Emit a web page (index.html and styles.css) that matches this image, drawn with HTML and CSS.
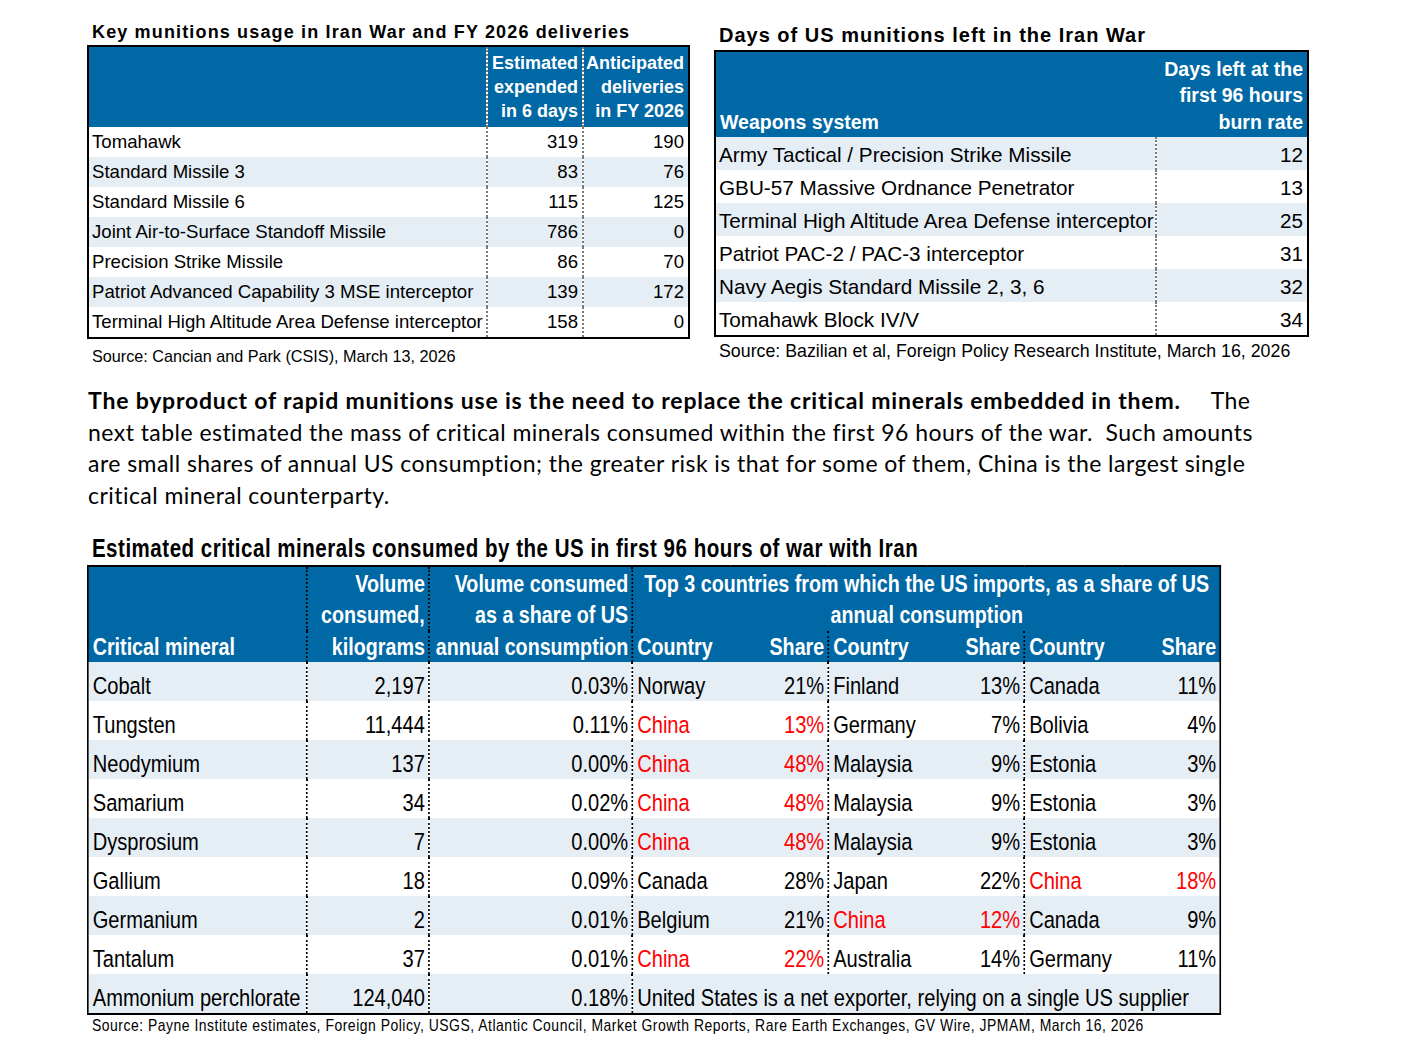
FILE: index.html
```html
<!DOCTYPE html>
<html lang="en">
<head>
    <meta charset="UTF-8">
    <title>Iran War munitions and critical minerals</title>
    <link rel="stylesheet" href="styles.css">
</head>
<body>
<div class="page">
    <div class="top">
        <section class="panel usage-panel">
            <h2 class="title usage-title">Key munitions usage in Iran War and FY 2026 deliveries</h2>
            <table class="usage">
                <colgroup><col class="c-name"><col class="c-used"><col class="c-due"></colgroup>
                <thead>
                <tr>
                    <th class="name"></th>
                    <th class="num">Estimated<br>expended<br>in 6 days</th>
                    <th class="num">Anticipated<br>deliveries<br>in FY 2026</th>
                </tr>
                </thead>
                <tbody>
                <tr><td class="name">Tomahawk</td><td class="num">319</td><td class="num">190</td></tr>
                <tr class="alt"><td class="name">Standard Missile 3</td><td class="num">83</td><td class="num">76</td></tr>
                <tr><td class="name">Standard Missile 6</td><td class="num">115</td><td class="num">125</td></tr>
                <tr class="alt"><td class="name">Joint Air-to-Surface Standoff Missile</td><td class="num">786</td><td class="num">0</td></tr>
                <tr><td class="name">Precision Strike Missile</td><td class="num">86</td><td class="num">70</td></tr>
                <tr class="alt"><td class="name">Patriot Advanced Capability 3 MSE interceptor</td><td class="num">139</td><td class="num">172</td></tr>
                <tr><td class="name">Terminal High Altitude Area Defense interceptor</td><td class="num">158</td><td class="num">0</td></tr>
                </tbody>
            </table>
            <p class="source usage-source">Source: Cancian and Park (CSIS), March 13, 2026</p>
        </section>

        <section class="panel days-panel">
            <h2 class="title days-title">Days of US munitions left in the Iran War</h2>
            <table class="days">
                <colgroup><col class="c-name"><col class="c-days"></colgroup>
                <thead>
                <tr>
                    <th class="name">Weapons system</th>
                    <th class="num">Days left at the<br>first 96 hours<br>burn rate</th>
                </tr>
                </thead>
                <tbody>
                <tr class="alt"><td class="name">Army Tactical / Precision Strike Missile</td><td class="num">12</td></tr>
                <tr><td class="name">GBU-57 Massive Ordnance Penetrator</td><td class="num">13</td></tr>
                <tr class="alt"><td class="name">Terminal High Altitude Area Defense interceptor</td><td class="num">25</td></tr>
                <tr><td class="name">Patriot PAC-2 / PAC-3 interceptor</td><td class="num">31</td></tr>
                <tr class="alt"><td class="name">Navy Aegis Standard Missile 2, 3, 6</td><td class="num">32</td></tr>
                <tr><td class="name">Tomahawk Block IV/V</td><td class="num">34</td></tr>
                </tbody>
            </table>
            <p class="source days-source">Source: Bazilian et al, Foreign Policy Research Institute, March 16, 2026</p>
        </section>
    </div>

    <p class="lead">
        <b>The byproduct of rapid munitions use is the need to replace the critical minerals embedded in them.</b><span class="gap"></span>The<br>
        next table estimated the mass of critical minerals consumed within the first 96 hours of the war.&nbsp; Such amounts<br>
        are small shares of annual US consumption; the greater risk is that for some of them, China is the largest single<br>
        critical mineral counterparty.
    </p>

    <section class="minerals-panel">
        <h2 class="title minerals-title">Estimated critical minerals consumed by the US in first 96 hours of war with Iran</h2>
        <table class="minerals">
            <colgroup>
                <col class="c-mineral"><col class="c-vol"><col class="c-pct">
                <col class="c-country"><col class="c-share">
                <col class="c-country"><col class="c-share">
                <col class="c-country"><col class="c-share">
            </colgroup>
            <thead>
            <tr class="head-top">
                <th class="mineral" rowspan="2">Critical mineral</th>
                <th class="vol" rowspan="2">Volume<br>consumed,<br>kilograms</th>
                <th class="pct" rowspan="2">Volume consumed<br>as a share of US<br>annual consumption</th>
                <th class="group" colspan="6">Top 3 countries from which the US imports, as a share of US<br>annual consumption</th>
            </tr>
            <tr class="head-sub">
                <th class="country">Country</th><th class="share">Share</th>
                <th class="country">Country</th><th class="share">Share</th>
                <th class="country">Country</th><th class="share">Share</th>
            </tr>
            </thead>
            <tbody>
            <tr class="alt">
                <td class="mineral">Cobalt</td><td class="vol">2,197</td><td class="pct">0.03%</td>
                <td class="country">Norway</td><td class="share">21%</td>
                <td class="country">Finland</td><td class="share">13%</td>
                <td class="country">Canada</td><td class="share">11%</td>
            </tr>
            <tr>
                <td class="mineral">Tungsten</td><td class="vol">11,444</td><td class="pct">0.11%</td>
                <td class="country china">China</td><td class="share china">13%</td>
                <td class="country">Germany</td><td class="share">7%</td>
                <td class="country">Bolivia</td><td class="share">4%</td>
            </tr>
            <tr class="alt">
                <td class="mineral">Neodymium</td><td class="vol">137</td><td class="pct">0.00%</td>
                <td class="country china">China</td><td class="share china">48%</td>
                <td class="country">Malaysia</td><td class="share">9%</td>
                <td class="country">Estonia</td><td class="share">3%</td>
            </tr>
            <tr>
                <td class="mineral">Samarium</td><td class="vol">34</td><td class="pct">0.02%</td>
                <td class="country china">China</td><td class="share china">48%</td>
                <td class="country">Malaysia</td><td class="share">9%</td>
                <td class="country">Estonia</td><td class="share">3%</td>
            </tr>
            <tr class="alt">
                <td class="mineral">Dysprosium</td><td class="vol">7</td><td class="pct">0.00%</td>
                <td class="country china">China</td><td class="share china">48%</td>
                <td class="country">Malaysia</td><td class="share">9%</td>
                <td class="country">Estonia</td><td class="share">3%</td>
            </tr>
            <tr>
                <td class="mineral">Gallium</td><td class="vol">18</td><td class="pct">0.09%</td>
                <td class="country">Canada</td><td class="share">28%</td>
                <td class="country">Japan</td><td class="share">22%</td>
                <td class="country china">China</td><td class="share china">18%</td>
            </tr>
            <tr class="alt">
                <td class="mineral">Germanium</td><td class="vol">2</td><td class="pct">0.01%</td>
                <td class="country">Belgium</td><td class="share">21%</td>
                <td class="country china">China</td><td class="share china">12%</td>
                <td class="country">Canada</td><td class="share">9%</td>
            </tr>
            <tr>
                <td class="mineral">Tantalum</td><td class="vol">37</td><td class="pct">0.01%</td>
                <td class="country china">China</td><td class="share china">22%</td>
                <td class="country">Australia</td><td class="share">14%</td>
                <td class="country">Germany</td><td class="share">11%</td>
            </tr>
            <tr class="alt">
                <td class="mineral">Ammonium perchlorate</td><td class="vol">124,040</td><td class="pct">0.18%</td>
                <td class="note" colspan="6">United States is a net exporter, relying on a single US supplier</td>
            </tr>
            </tbody>
        </table>
        <p class="source minerals-source">Source: Payne Institute estimates, Foreign Policy, USGS, Atlantic Council, Market Growth Reports, Rare Earth Exchanges, GV Wire, JPMAM, March 16, 2026</p>
    </section>
</div>
</body>
</html>
```

FILE: styles.css
```css
html,body{
    overflow-x: hidden;
}
body{
    margin: 0;
    background: #fff;
    color: #000;
    font-family: "Liberation Sans", Arial, sans-serif;
}
.page{
    padding-left: 87px;
}
.top{
    display: flex;
    align-items: flex-start;
    gap: 24px;
}
.title{
    margin: 0;
    padding-left: 5px;
    font-weight: bold;
    white-space: nowrap;
}
.source{
    margin: 0;
    padding-left: 5px;
    white-space: nowrap;
}
table{
    border-collapse: collapse;
    border: 2px solid #000;
    table-layout: fixed;
}
th,td{
    padding: 0;
    white-space: nowrap;
    overflow: hidden;
}
thead th{
    background: #0068a5;
    color: #fff;
    font-weight: bold;
    vertical-align: bottom;
}
.alt td{
    background: #e6eef5;
}
.name{
    text-align: left;
}
.num{
    text-align: right;
}

/*左上：弹药使用表*/
.usage-panel{
    width: 603px;
    padding-top: 21px;
}
.usage-title{
    font-size: 18px;
    line-height: 22px;
    letter-spacing: 1.15px;
    margin-bottom: 2px;
}
.usage{
    width: 603px;
    font-size: 18.6px;
}
.usage .c-name{ width: 399px; }
.usage .c-used{ width: 96px; }
.usage .c-due{ width: 106px; }
.usage th{
    font-size: 18px;
    line-height: 24px;
    padding: 4px 4px 4px 0;
    height: 72px;
}
.usage td{
    height: 30px;
    line-height: 30px;
}
.usage .name{
    padding-left: 3px;
}
.usage td.num{
    padding-right: 4px;
}
.usage th:nth-child(2),
.usage td:nth-child(2),
.usage th:nth-child(3),
.usage td:nth-child(3){
    border-left: 2px dotted #7a7a7a;
}
.usage-source{
    font-size: 16.2px;
    line-height: 18px;
    margin-top: 8px;
}

/*右上：剩余天数表*/
.days-panel{
    width: 595px;
    padding-top: 23px;
}
.days-title{
    font-size: 20px;
    line-height: 24px;
    letter-spacing: 1px;
    margin-bottom: 3px;
}
.days{
    width: 595px;
    font-size: 20.7px;
}
.days .c-name{ width: 441px; }
.days .c-days{ width: 152px; }
.days th{
    font-size: 19.5px;
    line-height: 26.5px;
    height: 80px;
    padding: 3px 4px 2px;
}
.days td{
    height: 31px;
    line-height: 31px;
    padding-top: 2px;
}
.days td.name{
    padding-left: 3px;
}
.days td.num{
    padding-right: 4px;
    border-left: 2px dotted #7a7a7a;
}
.days-source{
    font-size: 17.8px;
    line-height: 20px;
    margin-top: 4px;
}

/*正文段落*/
.lead{
    margin: 20px 0 0 1px;
    font-family: Lato, "Open Sans", sans-serif;
    font-size: 23px;
    line-height: 31.7px;
    letter-spacing: 0.45px;
    white-space: nowrap;
}
.lead b{
    letter-spacing: 0.8px;
}
.lead .gap{
    display: inline-block;
    width: 30px;
}

/*下方：关键矿产表，字体按 Arial Narrow 的比例横向压缩*/
.minerals-panel{
    width: 1382px;
    margin-top: 22px;
    transform: scaleX(0.82);
    transform-origin: left top;
}
.minerals-title{
    padding-left: 6px;
    font-size: 25px;
    line-height: 28px;
    letter-spacing: 0.64px;
    margin-bottom: 3px;
}
.minerals{
    width: 1382px;
    font-size: 24.5px;
    border-left-width: 2.5px;
    border-right-width: 2.5px;
    /*缩放后单元格之间会露白缝，表头用底色垫住*/
    background: linear-gradient(#0068a5 0, #0068a5 96px, #fff 96px);
}
.minerals .c-mineral{ width: 267px; }
.minerals .c-vol{ width: 149px; }
.minerals .c-pct{ width: 248px; }
.minerals .c-country{ width: 120px; }
.minerals .c-share{ width: 119px; }
.minerals th{
    font-size: 24px;
    line-height: 31.5px;
    padding: 0 4px 0 5px;
}
.minerals .head-top th{
    height: 63px;
}
.minerals .head-sub th{
    height: 31px;
}
.minerals th.group{
    text-align: center;
    vertical-align: top;
    padding-top: 1px;
}
.minerals td{
    height: 31px;
    line-height: 31px;
    padding: 8px 4px 0 5px;
}
/*浅色行的白缝用阴影补上*/
.minerals .alt td{
    box-shadow: 2px 0 0 #e6eef5;
}
.minerals .mineral,
.minerals .country,
.minerals .note{
    text-align: left;
}
.minerals .vol,
.minerals .pct,
.minerals .share{
    text-align: right;
}
.minerals .vol,
.minerals .pct,
.minerals .country,
.minerals .group,
.minerals .note{
    border-left: 2px dotted #000;
}
.minerals .china{
    color: #f00;
}
.minerals-source{
    padding-left: 6px;
    font-size: 17px;
    line-height: 22px;
    letter-spacing: 0.63px;
}
```
